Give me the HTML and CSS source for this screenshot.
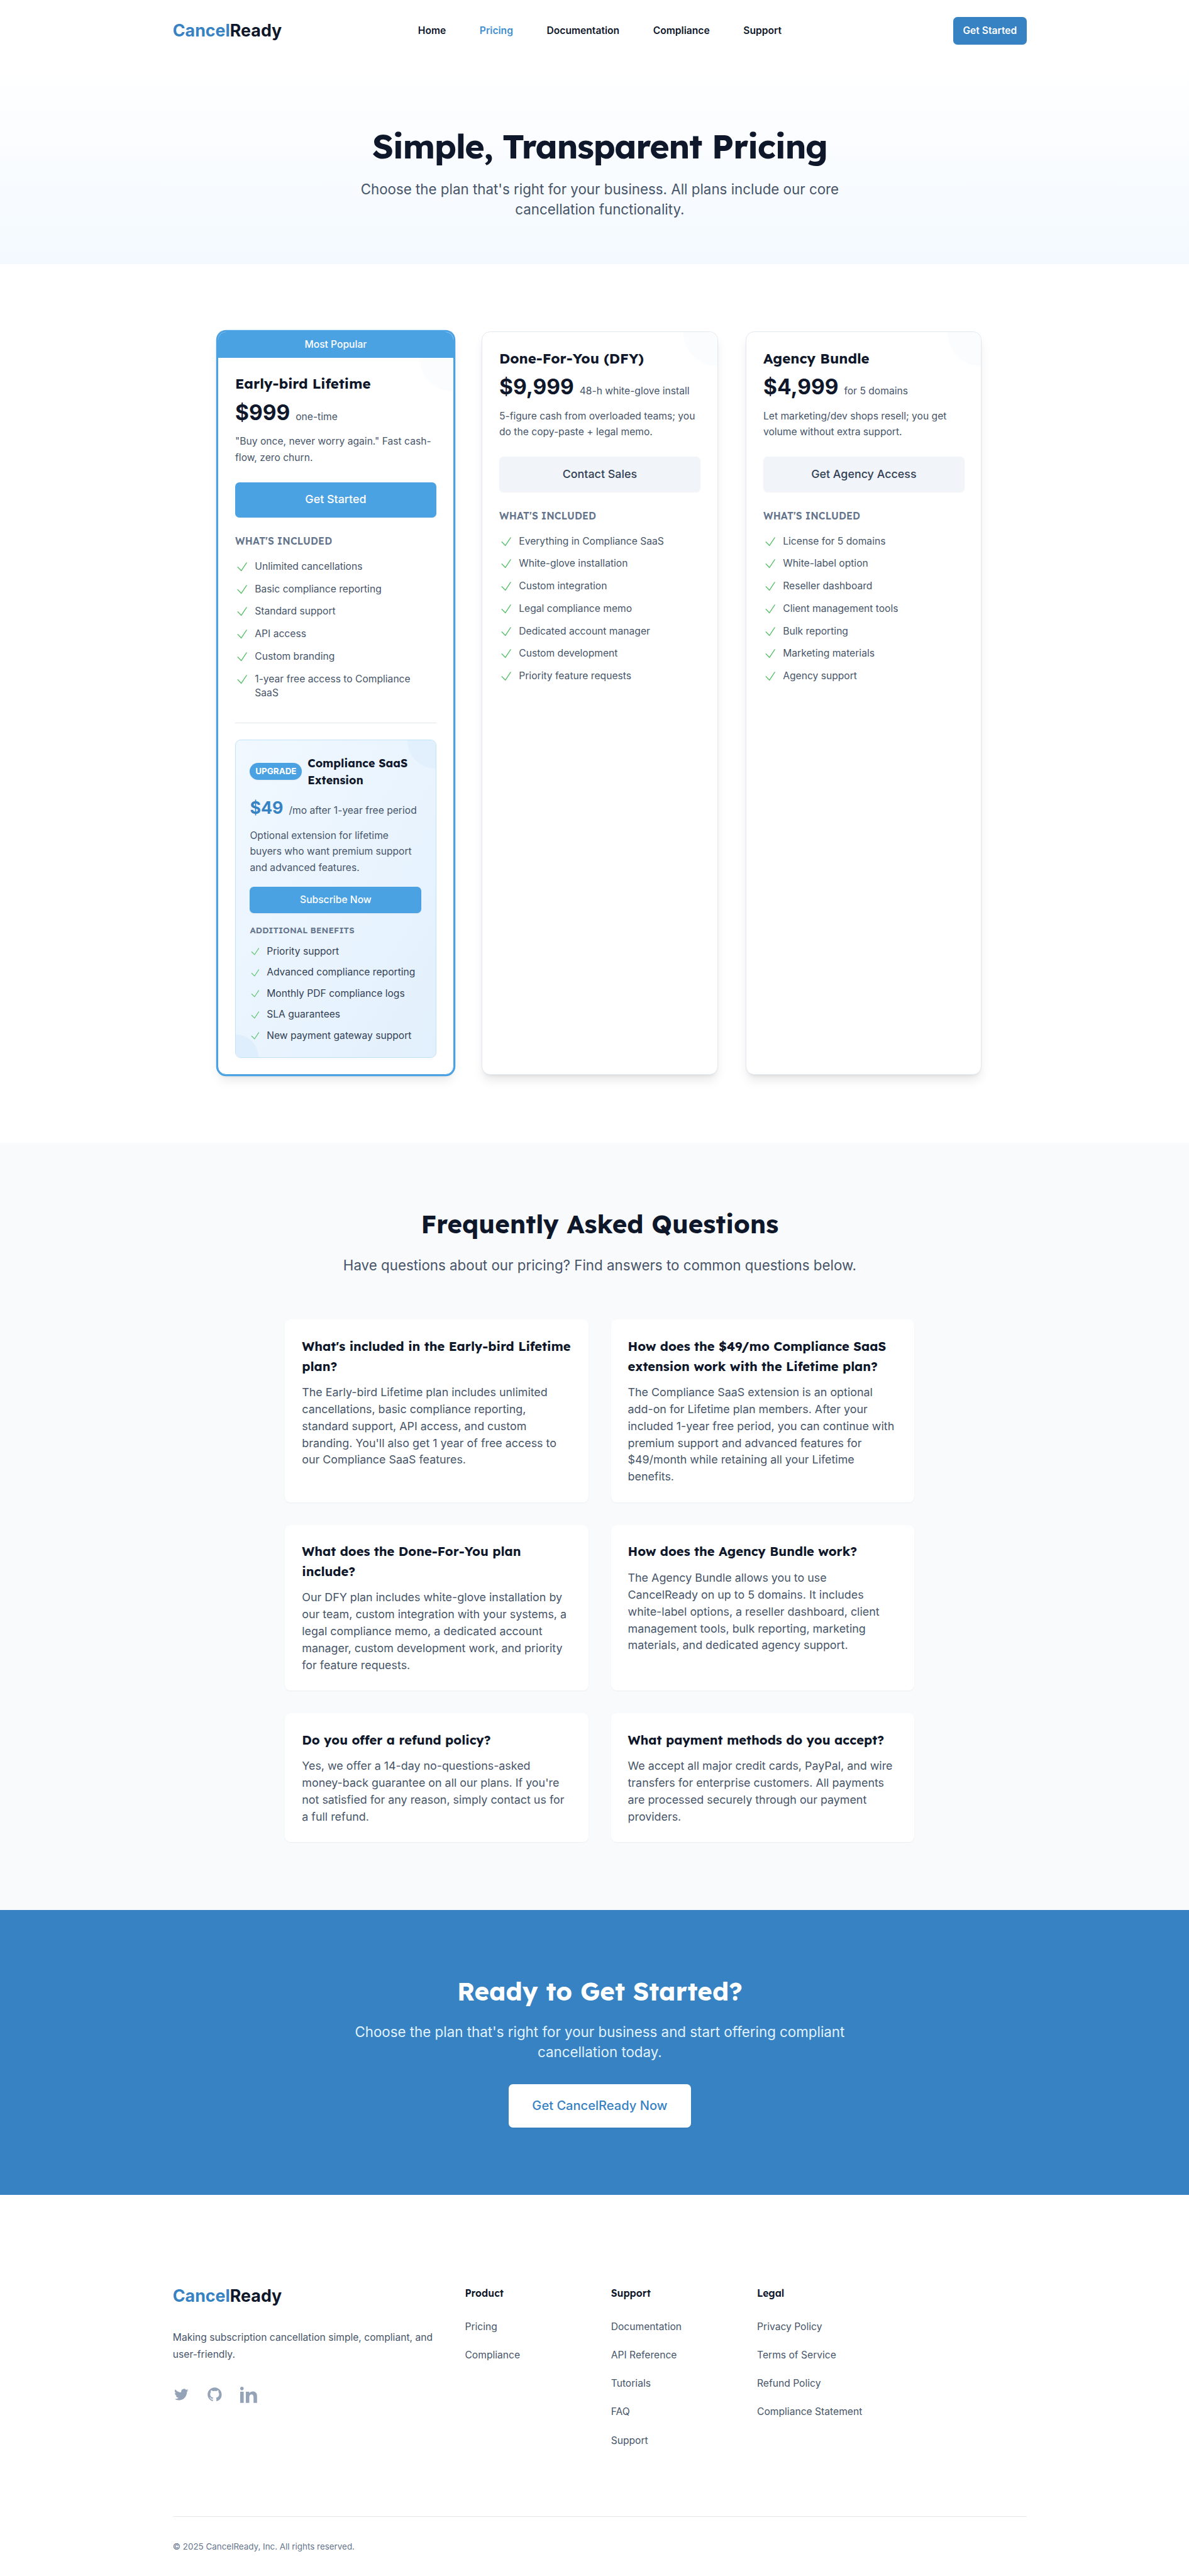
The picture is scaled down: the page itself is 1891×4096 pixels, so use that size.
FILE: index.html
```html
<!DOCTYPE html>
<html lang="en">
<head>
<meta charset="utf-8">
<title>Pricing - CancelReady</title>
<link rel="stylesheet" href="styles.css">
</head>
<body>
<svg width="0" height="0" class="sprite">
  <symbol id="check" viewBox="0 0 24 24"><path d="M4.5 12.75l6 6 9-13.5" fill="none" stroke="currentColor" stroke-width="1.5" stroke-linecap="round" stroke-linejoin="round"/></symbol>
</svg>

<header class="band header">
  <div class="container header-row">
    <div class="header-side"><a class="logo"><span>Cancel</span>Ready</a></div>
    <nav class="nav">
      <a>Home</a><a class="active">Pricing</a><a>Documentation</a><a>Compliance</a><a>Support</a>
    </nav>
    <div class="header-side end"><a class="btn-header">Get Started</a></div>
  </div>
</header>

<section class="band hero">
  <div class="narrow">
    <h1 class="hero-title">Simple, Transparent Pricing</h1>
    <p class="lead">Choose the plan that's right for your business. All plans include our core cancellation functionality.</p>
  </div>
</section>

<section class="band pricing">
  <div class="plans">
    <article class="plan featured">
      <div class="ribbon">Most Popular</div>
      <div class="plan-body">
        <h3 class="plan-name">Early-bird Lifetime</h3>
        <div class="price"><b>$999</b><span>one-time</span></div>
        <p class="plan-text">"Buy once, never worry again." Fast cash-flow, zero churn.</p>
        <a class="btn primary">Get Started</a>
        <h4 class="label">What's included</h4>
        <ul class="checks">
          <li><svg><use href="#check"/></svg>Unlimited cancellations</li>
          <li><svg><use href="#check"/></svg>Basic compliance reporting</li>
          <li><svg><use href="#check"/></svg>Standard support</li>
          <li><svg><use href="#check"/></svg>API access</li>
          <li><svg><use href="#check"/></svg>Custom branding</li>
          <li><svg><use href="#check"/></svg>1-year free access to Compliance SaaS</li>
        </ul>
        <hr class="rule">
        <div class="upgrade">
          <div class="upgrade-head"><span class="pill">UPGRADE</span><h4 class="upgrade-name">Compliance SaaS Extension</h4></div>
          <div class="price small"><b>$49</b><span>/mo after 1-year free period</span></div>
          <p class="plan-text">Optional extension for lifetime buyers who want premium support and advanced features.</p>
          <a class="btn primary compact">Subscribe Now</a>
          <h5 class="label tiny">Additional benefits</h5>
          <ul class="checks dense">
            <li><svg><use href="#check"/></svg>Priority support</li>
            <li><svg><use href="#check"/></svg>Advanced compliance reporting</li>
            <li><svg><use href="#check"/></svg>Monthly PDF compliance logs</li>
            <li><svg><use href="#check"/></svg>SLA guarantees</li>
            <li><svg><use href="#check"/></svg>New payment gateway support</li>
          </ul>
        </div>
      </div>
    </article>

    <article class="plan">
      <div class="plan-body">
        <h3 class="plan-name">Done-For-You (DFY)</h3>
        <div class="price"><b>$9,999</b><span>48-h white-glove install</span></div>
        <p class="plan-text">5-figure cash from overloaded teams; you do the copy-paste + legal memo.</p>
        <a class="btn">Contact Sales</a>
        <h4 class="label">What's included</h4>
        <ul class="checks">
          <li><svg><use href="#check"/></svg>Everything in Compliance SaaS</li>
          <li><svg><use href="#check"/></svg>White-glove installation</li>
          <li><svg><use href="#check"/></svg>Custom integration</li>
          <li><svg><use href="#check"/></svg>Legal compliance memo</li>
          <li><svg><use href="#check"/></svg>Dedicated account manager</li>
          <li><svg><use href="#check"/></svg>Custom development</li>
          <li><svg><use href="#check"/></svg>Priority feature requests</li>
        </ul>
      </div>
    </article>

    <article class="plan">
      <div class="plan-body">
        <h3 class="plan-name">Agency Bundle</h3>
        <div class="price"><b>$4,999</b><span>for 5 domains</span></div>
        <p class="plan-text">Let marketing/dev shops resell; you get volume without extra support.</p>
        <a class="btn">Get Agency Access</a>
        <h4 class="label">What's included</h4>
        <ul class="checks">
          <li><svg><use href="#check"/></svg>License for 5 domains</li>
          <li><svg><use href="#check"/></svg>White-label option</li>
          <li><svg><use href="#check"/></svg>Reseller dashboard</li>
          <li><svg><use href="#check"/></svg>Client management tools</li>
          <li><svg><use href="#check"/></svg>Bulk reporting</li>
          <li><svg><use href="#check"/></svg>Marketing materials</li>
          <li><svg><use href="#check"/></svg>Agency support</li>
        </ul>
      </div>
    </article>
  </div>
</section>

<section class="band faq">
  <h2 class="section-title">Frequently Asked Questions</h2>
  <p class="lead">Have questions about our pricing? Find answers to common questions below.</p>
  <div class="faq-grid">
    <div class="qa"><h3>What's included in the Early-bird Lifetime plan?</h3><p>The Early-bird Lifetime plan includes unlimited cancellations, basic compliance reporting, standard support, API access, and custom branding. You'll also get 1 year of free access to our Compliance SaaS features.</p></div>
    <div class="qa"><h3>How does the $49/mo Compliance SaaS extension work with the Lifetime plan?</h3><p>The Compliance SaaS extension is an optional add-on for Lifetime plan members. After your included 1-year free period, you can continue with premium support and advanced features for $49/month while retaining all your Lifetime benefits.</p></div>
    <div class="qa"><h3>What does the Done-For-You plan include?</h3><p>Our DFY plan includes white-glove installation by our team, custom integration with your systems, a legal compliance memo, a dedicated account manager, custom development work, and priority for feature requests.</p></div>
    <div class="qa"><h3>How does the Agency Bundle work?</h3><p>The Agency Bundle allows you to use CancelReady on up to 5 domains. It includes white-label options, a reseller dashboard, client management tools, bulk reporting, marketing materials, and dedicated agency support.</p></div>
    <div class="qa"><h3>Do you offer a refund policy?</h3><p>Yes, we offer a 14-day no-questions-asked money-back guarantee on all our plans. If you're not satisfied for any reason, simply contact us for a full refund.</p></div>
    <div class="qa"><h3>What payment methods do you accept?</h3><p>We accept all major credit cards, PayPal, and wire transfers for enterprise customers. All payments are processed securely through our payment providers.</p></div>
  </div>
</section>

<section class="band cta">
  <div class="narrow">
    <h2 class="section-title">Ready to Get Started?</h2>
    <p class="lead">Choose the plan that's right for your business and start offering compliant cancellation today.</p>
    <a class="btn-cta">Get CancelReady Now</a>
  </div>
</section>

<footer class="band footer">
  <div class="container">
    <div class="footer-grid">
      <div>
        <a class="logo"><span>Cancel</span>Ready</a>
        <p class="tagline">Making subscription cancellation simple, compliant, and user-friendly.</p>
        <div class="social">
          <svg viewBox="0 0 24 24"><path d="M8.29 20.251c7.547 0 11.675-6.253 11.675-11.675 0-.178 0-.355-.012-.53A8.348 8.348 0 0022 5.92a8.19 8.19 0 01-2.357.646 4.118 4.118 0 001.804-2.27 8.224 8.224 0 01-2.605.996 4.107 4.107 0 00-6.993 3.743 11.65 11.65 0 01-8.457-4.287 4.106 4.106 0 001.27 5.477A4.072 4.072 0 012.8 9.713v.052a4.105 4.105 0 003.292 4.022 4.095 4.095 0 01-1.853.07 4.108 4.108 0 003.834 2.85A8.233 8.233 0 012 18.407a11.616 11.616 0 006.29 1.84"/></svg>
          <svg viewBox="0 0 24 24"><path fill-rule="evenodd" d="M12 2C6.477 2 2 6.484 2 12.017c0 4.425 2.865 8.18 6.839 9.504.5.092.682-.217.682-.483 0-.237-.008-.868-.013-1.703-2.782.605-3.369-1.343-3.369-1.343-.454-1.158-1.11-1.466-1.11-1.466-.908-.62.069-.608.069-.608 1.003.07 1.531 1.032 1.531 1.032.892 1.53 2.341 1.088 2.91.832.092-.647.35-1.088.636-1.338-2.22-.253-4.555-1.113-4.555-4.951 0-1.093.39-1.988 1.029-2.688-.103-.253-.446-1.272.098-2.65 0 0 .84-.27 2.75 1.026A9.564 9.564 0 0112 6.844c.85.004 1.705.115 2.504.337 1.909-1.296 2.747-1.027 2.747-1.027.546 1.379.202 2.398.1 2.651.64.7 1.028 1.595 1.028 2.688 0 3.848-2.339 4.695-4.566 4.943.359.309.678.92.678 1.855 0 1.338-.012 2.419-.012 2.747 0 .268.18.58.688.482A10.019 10.019 0 0022 12.017C22 6.484 17.522 2 12 2z" clip-rule="evenodd"/></svg>
          <svg viewBox="0 0 24 24"><path d="M4.98 3.5c0 1.381-1.11 2.5-2.48 2.5s-2.48-1.119-2.48-2.5c0-1.38 1.11-2.5 2.48-2.5s2.48 1.12 2.48 2.5zm.02 4.5h-5v16h5v-16zm7.982 0h-4.968v16h4.969v-8.399c0-4.67 6.029-5.052 6.029 0v8.399h4.988v-10.131c0-7.88-8.922-7.593-11.018-3.714v-2.155z"/></svg>
        </div>
      </div>
      <div class="link-cols">
        <div><h3>Product</h3><ul><li><a>Pricing</a></li><li><a>Compliance</a></li></ul></div>
        <div><h3>Support</h3><ul><li><a>Documentation</a></li><li><a>API Reference</a></li><li><a>Tutorials</a></li><li><a>FAQ</a></li><li><a>Support</a></li></ul></div>
        <div><h3>Legal</h3><ul><li><a>Privacy Policy</a></li><li><a>Terms of Service</a></li><li><a>Refund Policy</a></li><li><a>Compliance Statement</a></li></ul></div>
      </div>
    </div>
    <p class="copyright">© 2025 CancelReady, Inc. All rights reserved.</p>
  </div>
</footer>
</body>
</html>
```
FILE: styles.css
```css
:root {
  --ink: #0f172a;
  --text: #475569;
  --muted: #64748b;
  --line: #e2e8f0;
  --brand: #3782c2;
  --brand-light: #4ba2e3;
  --heading: "Lexend", "Inter", sans-serif;
}
html { font-size: 17.871px; overflow-x: hidden; }
* { box-sizing: border-box; margin: 0; padding: 0; }
body { font: 400 1rem/1.5 "Inter", sans-serif; color: var(--text); background: #fff; }
ul { list-style: none; }
a { text-decoration: none; }
.sprite { position: absolute; }

/* every band is centred on a page 15 units wider than the window */
.band { padding-left: .9375rem; }
.container { width: 76rem; margin: 0 auto; }
.narrow { width: 48rem; margin: 0 auto; text-align: center; }

.header-row { display: flex; align-items: center; height: 5.5rem; }
.header-side { flex: 1; display: flex; }
.header-side.end { justify-content: flex-end; }
.logo { font-size: 1.5rem; line-height: 2rem; font-weight: 700; color: var(--ink); }
.logo span { color: var(--brand); }
.nav { display: flex; gap: 3rem; font-size: .875rem; font-weight: 600; color: var(--ink); }
.nav .active { color: #3f8fd0; }
.btn-header {
  font-size: .875rem; line-height: 1.25rem; font-weight: 600; color: #fff; background: var(--brand);
  padding: .625rem .875rem; border-radius: .375rem; box-shadow: 0 1px 2px rgba(0,0,0,.06);
}

.hero { height: 18rem; padding-top: 5.97rem; background: linear-gradient(#fff, #f3f9ff); }
.hero-title { font: 700 3rem/1 var(--heading); letter-spacing: -.025em; color: var(--ink); white-space: nowrap; }
.lead { font-size: 1.25rem; line-height: 1.75rem; margin-top: 1.5rem; }

.pricing { padding-top: 6rem; padding-bottom: 6.02rem; }
.plans { width: 68rem; margin: 0 auto; display: grid; grid-template-columns: repeat(3, 1fr); gap: 2.5rem; }
.plan {
  border: 1px solid var(--line); border-radius: .75rem; overflow: hidden; background: #fff;
  box-shadow: 0 .625rem .9375rem -.1875rem rgba(0,0,0,.1), 0 .25rem .375rem -.25rem rgba(0,0,0,.1);
}
.plan.featured {
  border-color: var(--brand-light);
  box-shadow: 0 0 0 .125rem var(--brand-light), 0 .625rem .9375rem -.1875rem rgba(0,0,0,.1), 0 .25rem .375rem -.25rem rgba(0,0,0,.1);
}
.ribbon { position: relative; z-index: 1; background: var(--brand-light); color: #fff; font-size: .875rem; line-height: 1.25rem; font-weight: 500; text-align: center; padding: .51rem .5rem .5rem; }
.plan-body { position: relative; padding: 1.5rem; }
.plan-body::before {
  content: ""; position: absolute; top: -3rem; right: -3rem; width: 6rem; height: 6rem;
  border-radius: 50%; background: #fbfcfe;
}
.plan-name { position: relative; font: 700 1.25rem/1.75rem var(--heading); color: var(--ink); white-space: nowrap; }
.price { display: flex; align-items: baseline; margin-top: .5rem; white-space: nowrap; }
.price b { font-size: 1.875rem; line-height: 2.25rem; font-weight: 700; color: var(--ink); }
.price span { margin-left: .5rem; font-size: .875rem; line-height: 1.25rem; }
.price.small { margin-top: .75rem; }
.price.small b { font-size: 1.5rem; line-height: 2rem; color: var(--brand); }
.plan-text { margin-top: .75rem; font-size: .875rem; line-height: 1.625; }
.btn {
  display: block; margin-top: 1.5rem; padding: .8125rem; border-radius: .375rem; text-align: center;
  font-weight: 500; line-height: 1.5rem; color: #334155; background: #f1f5fa; box-shadow: 0 1px 2px rgba(0,0,0,.05);
}
.btn.primary { color: #fff; background: var(--brand-light); }
.btn.compact { margin-top: 1rem; padding: .5625rem; font-size: .875rem; line-height: 1.25rem; }
.label { margin-top: 1.5rem; font: 600 .875rem/1.25rem var(--heading); letter-spacing: .008em; color: var(--muted); text-transform: uppercase; white-space: nowrap; }
.label.tiny { margin-top: 1.02rem; font-size: .75rem; line-height: 1rem; }
.checks { margin-top: 1.02rem; display: grid; gap: .75rem; font-size: .875rem; line-height: 1.25rem; }
.checks li { display: flex; gap: .5rem; }
.checks svg { flex: none; width: 1.25rem; height: 1.25rem; color: #5bc06b; }
.checks.dense { margin-top: .75rem; gap: .625rem; color: #334155; }
.checks.dense svg { width: 1rem; height: 1rem; margin-top: .125rem; }
.rule { border: 0; border-top: 1px solid var(--line); margin: 1.98rem 0 1.5rem; }
.upgrade {
  position: relative; overflow: hidden; padding: 1.25rem; border: 1px solid #bfe3f7; border-radius: .5rem;
  background: linear-gradient(to bottom right, #f1f8ff, #e2f0fd); box-shadow: 0 1px 2px rgba(0,0,0,.04);
}
.upgrade::before, .upgrade::after { content: ""; position: absolute; z-index: 0; border-radius: 50%; }
.upgrade::before { width: 5rem; height: 5rem; top: -2.5rem; right: -2.5rem; background: #e1f0fc; }
.upgrade::after { width: 4rem; height: 4rem; bottom: -2rem; left: -2rem; background: #dfeefd; }
.upgrade > * { position: relative; z-index: 1; }
.upgrade-head { display: flex; align-items: center; gap: .5rem; }
.pill { font-size: .75rem; line-height: 1rem; font-weight: 700; color: #fff; background: var(--brand-light); padding: .25rem .5rem; border-radius: 1rem; box-shadow: 0 1px 2px rgba(0,0,0,.06); }
.upgrade-name { font: 700 1rem/1.5rem var(--heading); color: var(--ink); }

.faq { background: #f9fafc; padding-top: 6rem; padding-bottom: 6rem; text-align: center; }
.section-title { font: 700 2.25rem/2.5rem var(--heading); color: var(--ink); }
.faq-grid { width: 56rem; margin: 4rem auto 0; display: grid; grid-template-columns: 1fr 1fr; gap: 2rem; text-align: left; }
.qa { background: #fff; border-radius: .5rem; padding: 1.5rem; box-shadow: 0 1px 2px rgba(0,0,0,.05); }
.qa h3 { font: 700 1.125rem/1.75rem var(--heading); color: var(--ink); }
.qa p { margin-top: .75rem; }

.cta { background: #3782c2; padding-top: 6rem; padding-bottom: 6rem; }
.cta .section-title { color: #fff; }
.cta .lead { color: #e0f2fe; }
.btn-cta {
  display: inline-block; vertical-align: top; margin-top: 2rem; padding: 1.0625rem 2.0938rem; border-radius: .375rem; background: #fff;
  font-size: 1.125rem; line-height: 1.75rem; font-weight: 500; color: var(--brand); box-shadow: 0 1px 2px rgba(0,0,0,.06);
}

.footer { padding-top: 7.98rem; padding-bottom: 2rem; }
.footer-grid { display: grid; grid-template-columns: 24rem 50rem; gap: 2rem; }
.footer .logo { display: block; }
.tagline { margin-top: 2rem; font-size: .875rem; line-height: 1.5rem; }
.social { display: flex; gap: 1.5rem; margin-top: 2rem; }
.social svg { width: 1.5rem; height: 1.5rem; fill: #94a3b8; overflow: visible; }
.link-cols { display: grid; grid-template-columns: repeat(4, 1fr); gap: 2rem; }
.link-cols h3 { font: 600 .875rem/1.5rem var(--heading); color: var(--ink); }
.link-cols ul { margin-top: 1.5rem; display: grid; gap: 1rem; }
.link-cols li { padding-top: .03rem; }
.link-cols a { display: block; font-size: .875rem; line-height: 1.5rem; white-space: nowrap; }
.copyright { margin-top: 5.98rem; border-top: 1px solid #e5e7eb; padding-top: 2rem; font-size: .75rem; line-height: 1.25rem; color: var(--muted); }
```
